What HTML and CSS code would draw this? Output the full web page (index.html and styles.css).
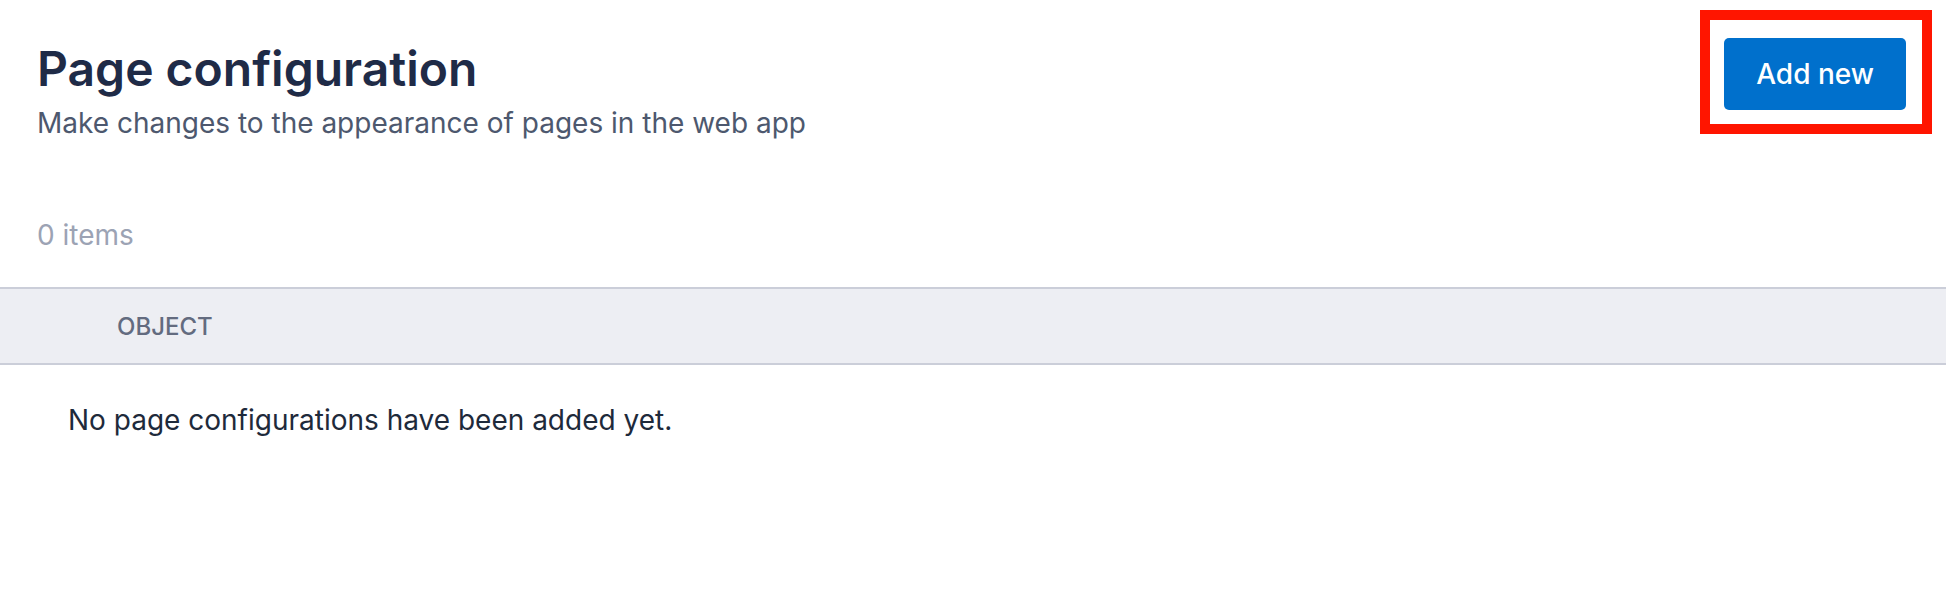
FILE: index.html
```html
<!DOCTYPE html>
<html lang="en">
<head>
<meta charset="utf-8">
<title>Page configuration</title>
<link rel="stylesheet" href="styles.css">
</head>
<body>
<div class="page">
  <header class="page-header">
    <div class="titles">
      <h1 class="title">Page configuration</h1>
      <p class="subtitle">Make changes to the appearance of pages in the web app</p>
    </div>
    <div class="highlight">
      <button class="btn-primary" type="button">Add new</button>
    </div>
  </header>
  <div class="count">0 items</div>
  <div class="table">
    <div class="table-head">
      <div class="th">OBJECT</div>
    </div>
    <div class="table-empty">No page configurations have been added yet.</div>
  </div>
</div>
</body>
</html>
```
FILE: styles.css
```css
html, body {
  margin: 0;
  padding: 0;
  background: #ffffff;
}
body {
  font-family: Inter, "Noto Sans", "Liberation Sans", sans-serif;
  color: #1e293b;
}
.page-header {
  display: flex;
  justify-content: space-between;
  align-items: flex-start;
  padding: 38px 40px 0 37px;
}
.title {
  margin: 2px 0 0 0;
  font-size: 48px;
  line-height: 58px;
  font-weight: 600;
  color: #1f2b47;
  letter-spacing: 0;
}
.subtitle {
  margin: 7px 0 0 0;
  font-size: 28px;
  line-height: 36px;
  color: #4d586e;
}
.highlight {
  position: relative;
  display: flex;
}
.highlight::after {
  content: "";
  position: absolute;
  top: -28px;
  left: -24px;
  right: -26px;
  bottom: -24px;
  border: 10px solid #ff1500;
  pointer-events: none;
}
.btn-primary {
  font-family: inherit;
  font-size: 28px;
  font-weight: 500;
  line-height: 36px;
  color: #ffffff;
  background: #0070cc;
  border: none;
  border-radius: 5px;
  padding: 18px 32px;
}
.count {
  margin: 76px 0 0 37px;
  font-size: 28px;
  line-height: 36px;
  color: #9ca3b4;
}
.table {
  margin-top: 34px;
}
.table-head {
  display: flex;
  background: #edeef3;
  border-top: 2px solid #cbced9;
  border-bottom: 2px solid #cbced9;
  height: 74px;
  align-items: center;
}
.th {
  padding-left: 117px;
  font-size: 24px;
  font-weight: 500;
  letter-spacing: 0;
  color: #636b7f;
}
.table-empty {
  padding: 37px 0 0 68px;
  font-size: 28px;
  line-height: 36px;
  color: #1e2a3b;
}
```
